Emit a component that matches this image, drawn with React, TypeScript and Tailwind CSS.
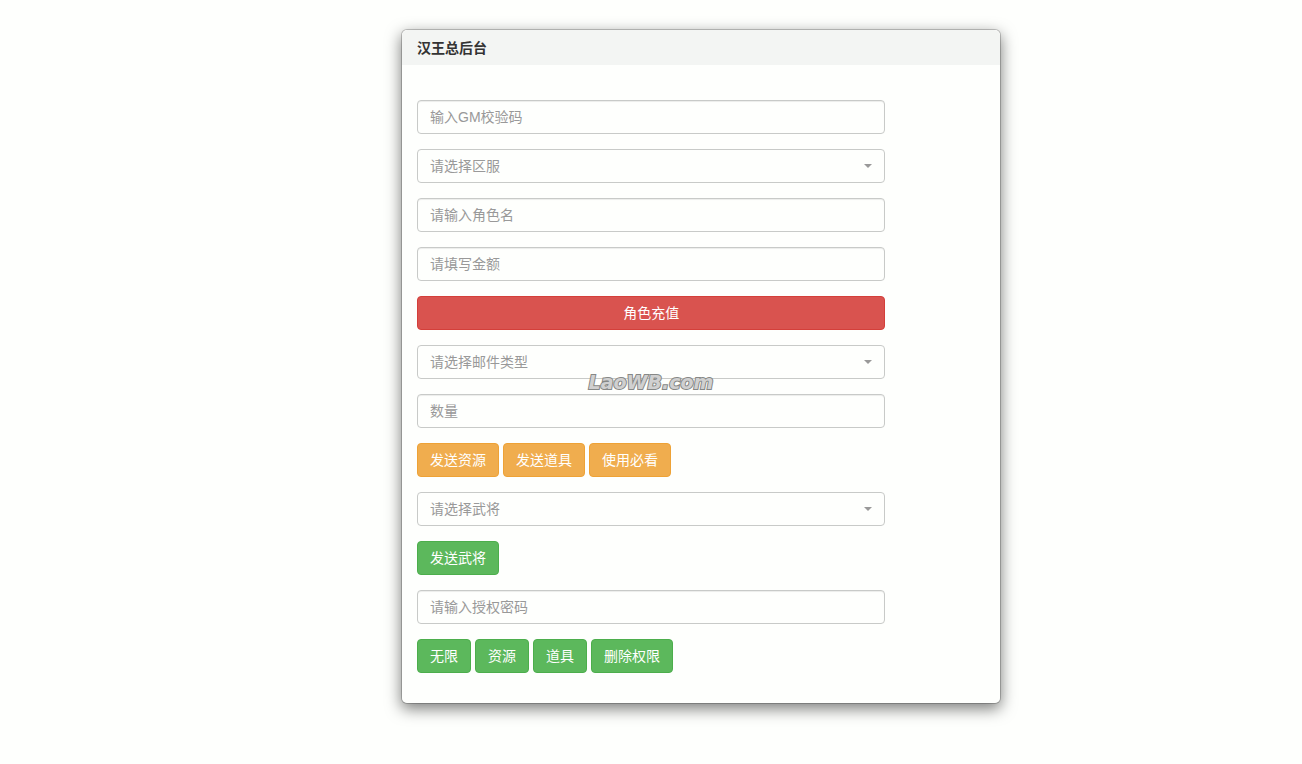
import { useState } from "react";

const servers = ["一区", "二区", "三区"];
const mailTypes = ["资源邮件", "道具邮件"];
const generals = ["关羽", "张飞", "赵云"];

const mailActions = ["发送资源", "发送道具", "使用必看"];
const grantActions = ["无限", "资源", "道具", "删除权限"];

const fieldClass =
  "block w-full h-[34px] rounded border border-[#c8cac8] bg-[#fefffd] px-3 text-sm leading-5 outline-none focus:border-[#66afe9]";

function TextField({ label, type = "text" }: { label: string; type?: string }) {
  return (
    <input
      type={type}
      aria-label={label}
      placeholder={label}
      className={`${fieldClass} text-[#555] placeholder:text-[#999] shadow-[inset_0_1px_1px_rgba(0,0,0,0.075)]`}
    />
  );
}

function SelectField({ label, options }: { label: string; options: string[] }) {
  const [value, setValue] = useState("");

  return (
    <div className="relative">
      <select
        aria-label={label}
        value={value}
        onChange={(e) => setValue(e.target.value)}
        className={`${fieldClass} appearance-none cursor-pointer text-[#999]`}
      >
        <option value="">{label}</option>
        {options.map((option) => (
          <option key={option} value={option}>
            {option}
          </option>
        ))}
      </select>
      <svg
        viewBox="0 0 8 4"
        className="pointer-events-none absolute right-[13px] top-[15px] h-1 w-2 fill-[#999]"
        aria-hidden="true"
      >
        <path d="M0 0h8L4 4z" />
      </svg>
    </div>
  );
}

const variants = {
  danger: "border-[#d43f3a] bg-[#d9534f] hover:bg-[#c9302c]",
  warning: "border-[#eea236] bg-[#f0ad4e] hover:bg-[#ec971f]",
  success: "border-[#4cae4c] bg-[#5cb85c] hover:bg-[#449d44]",
};

function Button({
  label,
  variant,
  block = false,
}: {
  label: string;
  variant: keyof typeof variants;
  block?: boolean;
}) {
  return (
    <button
      type="button"
      className={`h-[34px] rounded border px-3 text-sm leading-5 text-white cursor-pointer ${variants[variant]} ${
        block ? "w-full" : ""
      }`}
    >
      {label}
    </button>
  );
}

export default function App() {
  return (
    <div className="relative min-h-screen bg-[#fefffd] pl-[100px] font-['Liberation_Sans','Noto_Sans_CJK_SC',sans-serif] text-sm text-[#333]">
      <div className="pt-[29px] pb-[60px]">
        <main className="mx-auto max-w-[600px] rounded-md border border-black/20 bg-[#fefffd] bg-clip-padding shadow-[0_5px_15px_rgba(0,0,0,0.5)]">
          <header className="rounded-t-md bg-[#f3f5f3] px-[15px] pt-2 pb-[7px]">
            <h1 className="text-sm font-bold leading-5">汉王总后台</h1>
          </header>

          <form className="flex w-5/6 flex-col gap-[15px] px-[15px] pt-[35px] pb-[30px]">
            <TextField label="输入GM校验码" />
            <SelectField label="请选择区服" options={servers} />
            <TextField label="请输入角色名" />
            <TextField label="请填写金额" />
            <Button label="角色充值" variant="danger" block />
            <SelectField label="请选择邮件类型" options={mailTypes} />
            <TextField label="数量" />
            <div className="flex flex-wrap gap-1">
              {mailActions.map((action) => (
                <Button key={action} label={action} variant="warning" />
              ))}
            </div>
            <SelectField label="请选择武将" options={generals} />
            <div className="flex">
              <Button label="发送武将" variant="success" />
            </div>
            <TextField label="请输入授权密码" type="password" />
            <div className="flex flex-wrap gap-1">
              {grantActions.map((action) => (
                <Button key={action} label={action} variant="success" />
              ))}
            </div>
          </form>
        </main>
      </div>

      <span className="pointer-events-none absolute left-1/2 top-1/2 -translate-x-1/2 -translate-y-1/2 select-none font-['DejaVu_Sans',sans-serif] text-[19px] font-bold italic leading-5 text-[#d0d0d0] [-webkit-text-stroke:2px_#868886] [paint-order:stroke_fill]">
        LaoWB.com
      </span>
    </div>
  );
}
